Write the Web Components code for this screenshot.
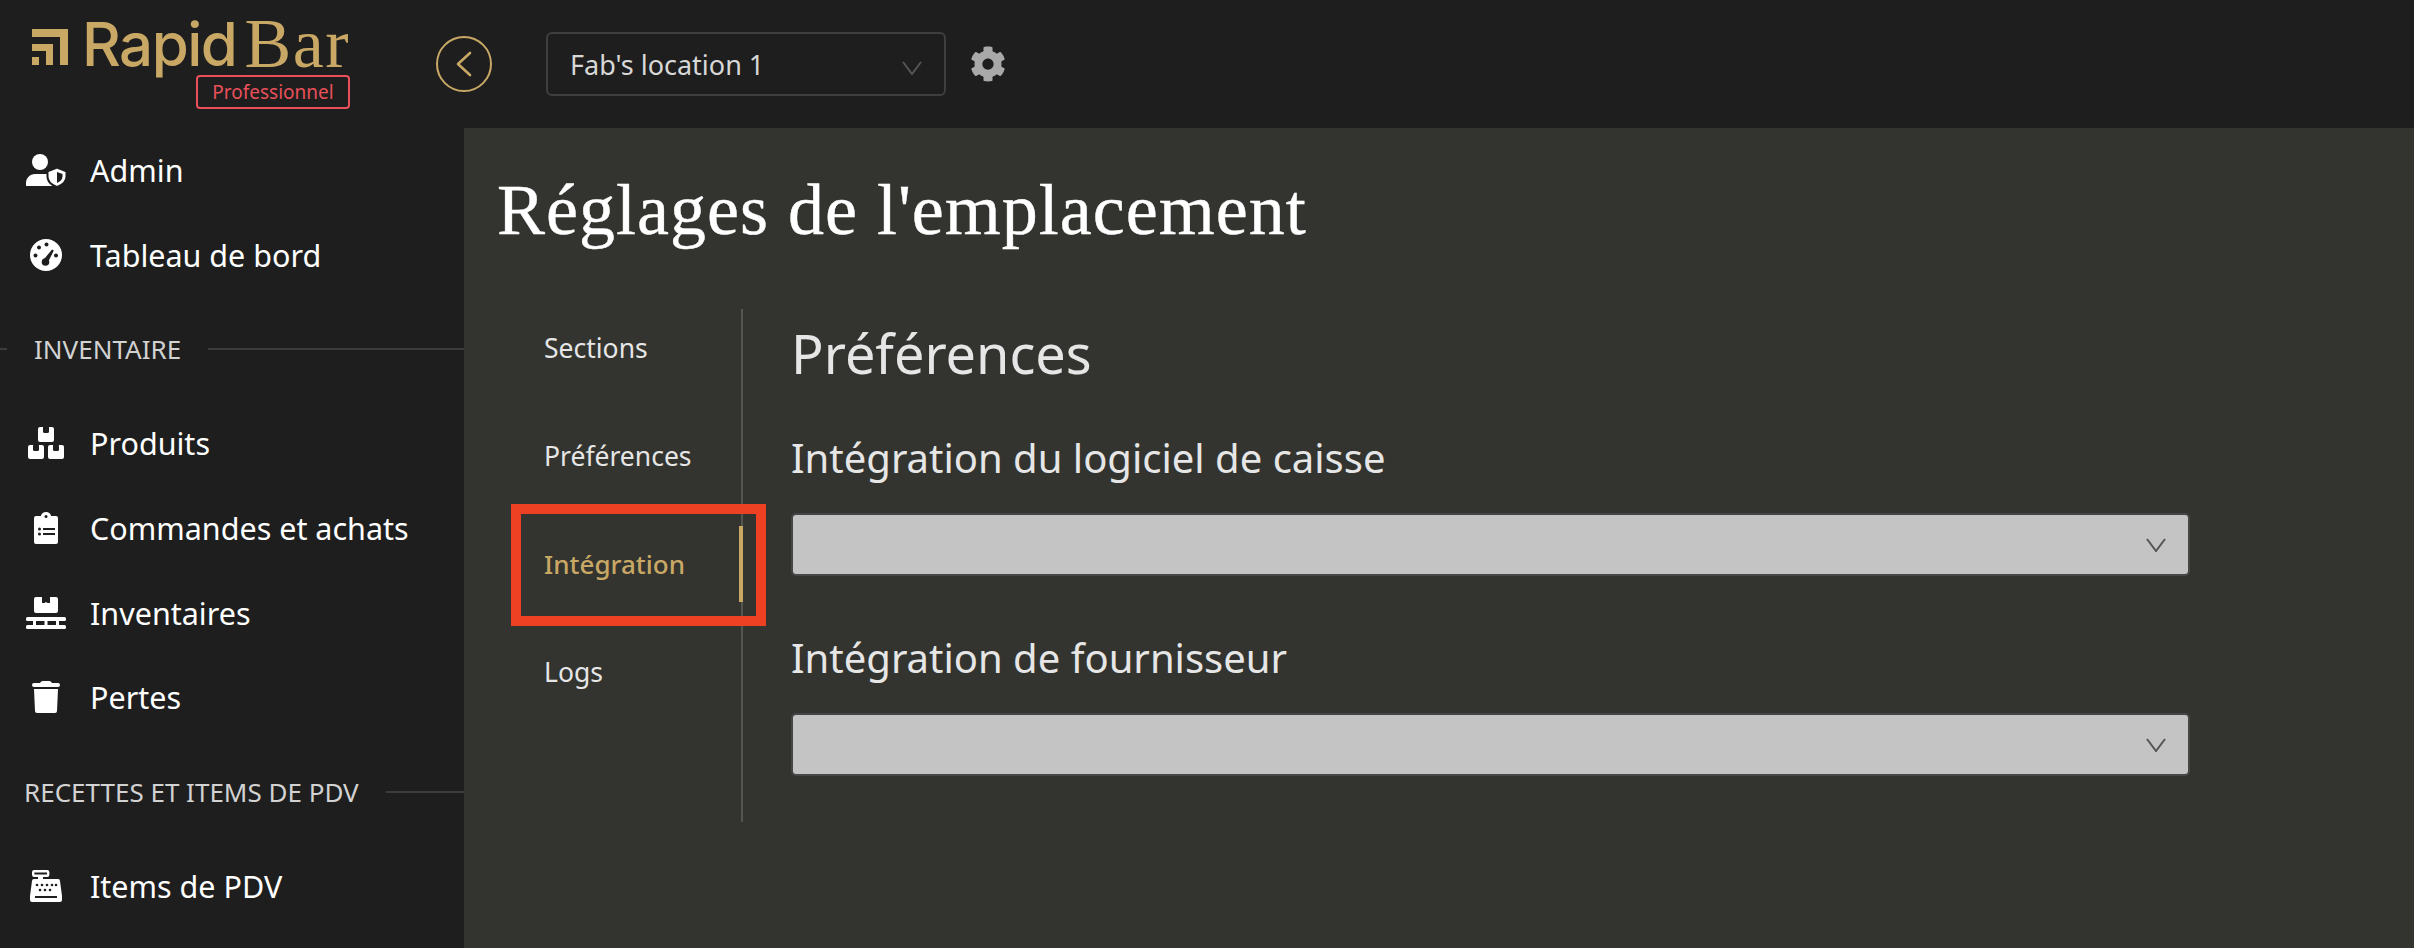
<!DOCTYPE html>
<html lang="fr">
<head>
<meta charset="utf-8">
<title>Réglages de l'emplacement</title>
<style>
  html, body { margin: 0; height: 100%; background: #1e1e1e; overflow: hidden; }
  body { font-family: "Noto Sans", "Liberation Sans", sans-serif; }
  svg { display: block; }
</style>
</head>
<body>
<rb-app>
  <rb-topbar slot="top"></rb-topbar>
  <rb-sidebar slot="side">
    <rb-nav-item label="Admin" icon="admin"></rb-nav-item>
    <rb-nav-item label="Tableau de bord" icon="gauge"></rb-nav-item>
    <rb-nav-heading lead="7" pad="27">INVENTAIRE</rb-nav-heading>
    <rb-nav-item label="Produits" icon="boxes"></rb-nav-item>
    <rb-nav-item label="Commandes et achats" icon="clipboard"></rb-nav-item>
    <rb-nav-item label="Inventaires" icon="pallet"></rb-nav-item>
    <rb-nav-item label="Pertes" icon="trash"></rb-nav-item>
    <rb-nav-heading lead="0" pad="24">RECETTES ET ITEMS DE PDV</rb-nav-heading>
    <rb-nav-item label="Items de PDV" icon="register"></rb-nav-item>
  </rb-sidebar>
  <rb-settings slot="main">
    <rb-tabs slot="tabs">
      <rb-tab>Sections</rb-tab>
      <rb-tab>Préférences</rb-tab>
      <rb-tab active marked>Intégration</rb-tab>
      <rb-tab>Logs</rb-tab>
    </rb-tabs>
    <rb-field label="Intégration du logiciel de caisse"></rb-field>
    <rb-field label="Intégration de fournisseur"></rb-field>
  </rb-settings>
</rb-app>

<script>
// icons, drawn on a 40x32 box
const ICONS = {
  admin: `<circle cx="14" cy="8" r="8" fill="#fff"/>
    <path d="M0 32v-3c0-5 4-9 9-9h10c1.500 0 2.500 .3 3.500 .8v4c0 2.500 1.500 5 4 7.200z" fill="#fff"/>
    <path d="M31 13.500l9.500 3.800v5.200c0 4.500-4 8.500-9.500 10.500-5.500-2-9.500-6-9.500-10.500v-5.200z" fill="#fff" stroke="#1e1e1e" stroke-width="2"/>
    <path d="M31 18v11c3-1.300 5.500-3.500 5.500-6.500v-2.500z" fill="#1e1e1e"/>`,
  gauge: `<circle cx="20" cy="16" r="16" fill="#fff"/>
    <g fill="#1e1e1e"><circle cx="9.500" cy="16.500" r="2"/><circle cx="13" cy="8.500" r="2"/><circle cx="20.500" cy="5.500" r="2"/><circle cx="30" cy="16.500" r="2"/>
    <circle cx="19.500" cy="23" r="3.800"/><path d="M16.500 22l9.500-11.500 1.800 1-6.500 13z"/></g>`,
  boxes: `<g fill="#fff"><rect x="12" y="0" width="16" height="15" rx="2"/><rect x="2" y="18" width="16" height="14" rx="2"/><rect x="22" y="18" width="16" height="14" rx="2"/></g>
    <g fill="#1e1e1e"><rect x="17" y="-1" width="6" height="7" rx="1.500"/><rect x="7" y="17" width="6" height="7" rx="1.500"/><rect x="27" y="17" width="6" height="7" rx="1.500"/></g>`,
  clipboard: `<path d="M10 4h5a5 4 0 0 1 10 0h5a2 2 0 0 1 2 2v24a2 2 0 0 1-2 2h-20a2 2 0 0 1-2-2v-24a2 2 0 0 1 2-2z" fill="#fff"/>
    <g fill="#1e1e1e"><circle cx="20" cy="4.500" r="1.500"/><circle cx="13.500" cy="17" r="1.500"/><circle cx="13.500" cy="22" r="1.500"/><rect x="17" y="16" width="12" height="2"/><rect x="17" y="21" width="12" height="2"/></g>`,
  pallet: `<path d="M10 0h6v6h2.500l1.500-1 1.500 1h2.500v-6h6a2 2 0 0 1 2 2v12a2 2 0 0 1-2 2h-20a2 2 0 0 1-2-2v-12a2 2 0 0 1 2-2z" fill="#fff"/>
    <g fill="#fff"><rect x="0" y="20" width="40" height="4" rx="1.500"/><rect x="0" y="28" width="40" height="4" rx="1.500"/><rect x="7" y="23" width="3" height="6"/><rect x="18.500" y="23" width="3" height="6"/><rect x="30" y="23" width="3" height="6"/></g>`,
  trash: `<g fill="#fff"><path d="M8 2h6c1-1.500 2-2 3-2h6c1 0 2 .5 3 2h6a2 2 0 0 1 2 2v0a2 2 0 0 1-2 2h-24a2 2 0 0 1-2-2v0a2 2 0 0 1 2-2z"/>
    <path d="M8 8h24l-1 22a2 2 0 0 1-2 2h-18a2 2 0 0 1-2-2z"/></g>`,
  register: `<rect x="7.200" y="1.200" width="15" height="4.600" rx="1" fill="none" stroke="#fff" stroke-width="2.400"/>
    <path d="M12 6h5v4h-5z M8 9h24a2 2 0 0 1 2 2l2 15v4a2 2 0 0 1-2 2h-28a2 2 0 0 1-2-2v-4l2-15a2 2 0 0 1 2-2z" fill="#fff"/>
    <g fill="#1e1e1e"><circle cx="11" cy="15" r="1.300"/><circle cx="16" cy="15" r="1.300"/><circle cx="21" cy="15" r="1.300"/><circle cx="26" cy="15" r="1.300"/><circle cx="30" cy="15" r="1.300"/>
    <circle cx="14" cy="20" r="1.300"/><circle cx="19" cy="20" r="1.300"/><circle cx="24" cy="20" r="1.300"/><rect x="9" y="26" width="22" height="2"/></g>`
};

const CHEVRON = `<svg width="20" height="14" viewBox="0 0 20 14"><path d="M1 1l9 12 9-12" fill="none" stroke="currentColor" stroke-width="2"/></svg>`;

class RbApp extends HTMLElement {
  constructor() {
    super();
    this.attachShadow({ mode: "open" });
    this.shadowRoot.innerHTML = `
      <style>
        :host { display: flex; flex-direction: column; height: 948px; overflow: hidden; }
        .row { display: flex; flex: 1; min-height: 0; }
        ::slotted([slot="side"]) { flex: 0 0 464px; }
        ::slotted([slot="main"]) { flex: 1; }
      </style>
      <slot name="top"></slot>
      <div class="row">
        <slot name="side"></slot>
        <slot name="main"></slot>
      </div>`;
  }
}

class RbTopbar extends HTMLElement {
  constructor() {
    super();
    this.attachShadow({ mode: "open" });
    this.shadowRoot.innerHTML = `
      <style>
        :host { display: flex; align-items: flex-start; height: 128px; background: #1e1e1e; font-family: "Noto Sans", sans-serif; }
        .logo { width: 436px; flex: none; padding-left: 32px; box-sizing: border-box; height: 128px; display: flex; flex-direction: column; }
        .mark { display: flex; align-items: flex-start; height: 75px; color: #c9a866; }
        .mark svg { margin-top: 29px; margin-right: 14px; }
        .rapid { font: 500 60px/60px Inter, sans-serif; letter-spacing: -1.500px; margin-top: 14px; }
        .bar { font: 400 70px/60px "Liberation Serif", serif; margin: 14px 0 0 8px; letter-spacing: 1.500px; }
        .badge { align-self: flex-start; margin-left: 164px; width: 154px; height: 34px; box-sizing: border-box; border: 2px solid #e9505a; border-radius: 4px; color: #e9505a; font-size: 19px; line-height: 31px; text-align: center; }
        .back { width: 56px; height: 56px; margin-top: 36px; box-sizing: border-box; border: 2px solid #c9a866; border-radius: 50%; display: flex; align-items: center; justify-content: center; flex: none; }
        .loc { margin: 32px 0 0 54px; width: 400px; height: 64px; box-sizing: border-box; border: 2px solid #3f3f3f; border-radius: 6px; display: flex; align-items: center; justify-content: space-between; padding: 0 22px 0 22px; color: #d8d8d8; font-size: 27px; }
        .loc .chev { color: #555; }
        .gear { margin: 46px 0 0 24px; }
      </style>
      <div class="logo">
        <div class="mark">
          <svg width="36" height="36" viewBox="0 0 36 36" fill="#c9a866"><path d="M0 0h36v36h-8v-28h-28z"/><path d="M0 15h21v21h-7v-14h-14z"/><rect x="0" y="28" width="7" height="8"/></svg>
          <span class="rapid">Rapid</span><span class="bar">Bar</span>
        </div>
        <div class="badge">Professionnel</div>
      </div>
      <div class="back"><svg width="16" height="26" viewBox="0 0 16 26"><path d="M14 2l-12 11 12 11" fill="none" stroke="#c9a866" stroke-width="2.600" stroke-linecap="round" stroke-linejoin="round"/></svg></div>
      <div class="loc"><span>Fab's location 1</span><span class="chev">${CHEVRON}</span></div>
      <svg class="gear" width="36" height="36" viewBox="0 0 512 512"><path fill="#a9a9a9" d="M487.4 315.7l-42.6-24.6c4.3-23.2 4.3-47 0-70.2l42.6-24.6c4.9-2.8 7.1-8.6 5.5-14-11.1-35.6-30-67.8-54.7-94.6-3.8-4.1-10-5.100-14.8-2.300L380.800 110c-17.900-15.400-38.500-27.300-60.800-35.100V25.800c0-5.600-3.900-10.500-9.400-11.700-36.700-8.200-74.300-7.800-109.200 0-5.500 1.200-9.400 6.100-9.400 11.700V75c-22.200 7.900-42.800 19.800-60.800 35.100L88.700 85.500c-4.900-2.800-11-1.900-14.800 2.300-24.700 26.700-43.600 58.900-54.700 94.600-1.700 5.400.6 11.200 5.500 14L67.300 221c-4.300 23.200-4.300 47 0 70.200l-42.600 24.600c-4.900 2.800-7.100 8.600-5.500 14 11.100 35.600 30 67.800 54.700 94.600 3.800 4.100 10 5.100 14.800 2.300l42.600-24.600c17.900 15.400 38.500 27.300 60.800 35.100v49.200c0 5.600 3.900 10.500 9.400 11.700 36.700 8.200 74.300 7.800 109.200 0 5.500-1.200 9.400-6.100 9.400-11.700v-49.200c22.200-7.900 42.800-19.800 60.800-35.100l42.600 24.600c4.900 2.800 11 1.900 14.800-2.300 24.700-26.700 43.600-58.900 54.700-94.600 1.500-5.500-.7-11.300-5.600-14.100zM256 336c-44.100 0-80-35.900-80-80s35.900-80 80-80 80 35.900 80 80-35.900 80-80 80z"/></svg>`;
  }
}

class RbSidebar extends HTMLElement {
  constructor() {
    super();
    this.attachShadow({ mode: "open" });
    this.shadowRoot.innerHTML = `
      <style>:host { display: block; background: #1e1e1e; overflow: hidden; }</style>
      <slot></slot>`;
  }
}

class RbNavItem extends HTMLElement {
  connectedCallback() {
    if (this.shadowRoot) return;
    this.attachShadow({ mode: "open" });
    this.shadowRoot.innerHTML = `
      <style>
        :host { display: flex; align-items: center; height: 84.600px; padding-left: 26px; gap: 24px; color: #fff; font-family: "Noto Sans", sans-serif; font-size: 30.500px; }
        svg { flex: none; display: block; }
      </style>
      <svg width="40" height="32" viewBox="0 0 40 32">${ICONS[this.getAttribute("icon")]}</svg>
      <span>${this.getAttribute("label")}</span>`;
  }
}

class RbNavHeading extends HTMLElement {
  connectedCallback() {
    if (this.shadowRoot) return;
    this.attachShadow({ mode: "open" });
    const lead = this.getAttribute("lead");
    const pad = this.getAttribute("pad");
    this.shadowRoot.innerHTML = `
      <style>
        :host { display: flex; align-items: center; height: 104px; color: #d2d2d2; font-family: "Noto Sans", sans-serif; font-size: 26px; }
        .lead { width: ${lead}px; height: 2px; background: #3c3c3c; flex: none; }
        .txt { margin: 0 27px 0 ${pad}px; white-space: nowrap; }
        .line { flex: 1; height: 2px; background: #3c3c3c; }
      </style>
      <div class="lead"></div><div class="txt"><slot></slot></div><div class="line"></div>`;
  }
}

class RbSettings extends HTMLElement {
  constructor() {
    super();
    this.attachShadow({ mode: "open" });
    this.shadowRoot.innerHTML = `
      <style>
        :host { display: block; background: #33342f; color: #e6e6e6; padding: 42px 0 0 33px; font-family: "Noto Sans", sans-serif; }
        h1 { margin: 0; font: 400 72px/80px "Liberation Serif", serif; color: #fff; letter-spacing: 1px; -webkit-text-stroke: .4px #fff; }
        .body { display: flex; margin: 59px 0 0 14px; }
        .side { flex: none; width: 281px; }
        .pane { width: 1399px; margin-left: -1px; padding-top: 14px; }
        h2 { margin: 0 0 50px; font-size: 54px; font-weight: 400; line-height: 60px; }
      </style>
      <h1>Réglages de l'emplacement</h1>
      <div class="body">
        <div class="side"><slot name="tabs"></slot></div>
        <div class="pane">
          <h2>Préférences</h2>
          <slot></slot>
        </div>
      </div>`;
  }
}

class RbTabs extends HTMLElement {
  constructor() {
    super();
    this.attachShadow({ mode: "open" });
    this.shadowRoot.innerHTML = `
      <style>
        :host { display: flow-root; height: 513px; border-right: 2px solid #55564f; box-sizing: border-box; width: 232px; }
        .list { margin-top: -15px; }
      </style>
      <div class="list"><slot></slot></div>`;
  }
}

class RbTab extends HTMLElement {
  constructor() {
    super();
    this.attachShadow({ mode: "open" });
    this.shadowRoot.innerHTML = `
      <style>
        :host { display: flex; align-items: center; position: relative; height: 108px; font-size: 26.500px; color: #e6e6e6; font-family: "Noto Sans", sans-serif; padding-left: 33px; box-sizing: border-box; }
        :host([active]) { color: #c9a866; font-weight: 500; font-size: 26px; }
        :host([active]) .bar { position: absolute; top: 16px; bottom: 16px; right: -2px; width: 4px; background: #c9a866; }
        :host([marked]) .mark { position: absolute; left: 0; right: -25px; top: -6px; bottom: -8px; border: 10px solid #ee4023; }
      </style>
      <slot></slot><div class="bar"></div><div class="mark"></div>`;
  }
}

class RbField extends HTMLElement {
  connectedCallback() {
    if (this.shadowRoot) return;
    this.attachShadow({ mode: "open" });
    this.shadowRoot.innerHTML = `
      <style>
        :host { display: block; margin-bottom: 57px; font-family: "Noto Sans", sans-serif; }
        label { display: block; font-size: 40px; line-height: 50px; margin-bottom: 30px; color: #e6e6e6; }
        .sel { height: 63px; box-sizing: border-box; background: #c4c4c4; border: 2px solid #464646; border-radius: 5px; display: flex; align-items: center; justify-content: flex-end; padding-right: 22px; color: #555; }
      </style>
      <label>${this.getAttribute("label")}</label>
      <div class="sel">${CHEVRON}</div>`;
  }
}

customElements.define("rb-app", RbApp);
customElements.define("rb-topbar", RbTopbar);
customElements.define("rb-sidebar", RbSidebar);
customElements.define("rb-nav-item", RbNavItem);
customElements.define("rb-nav-heading", RbNavHeading);
customElements.define("rb-settings", RbSettings);
customElements.define("rb-tabs", RbTabs);
customElements.define("rb-tab", RbTab);
customElements.define("rb-field", RbField);
</script>
</body>
</html>
